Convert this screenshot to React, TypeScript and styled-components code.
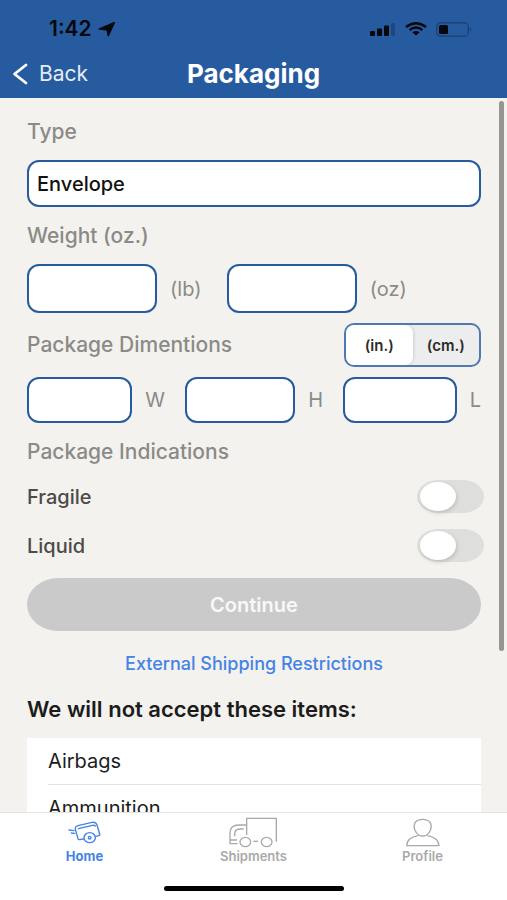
import React, { useState } from "react";
import styled, { createGlobalStyle, css } from "styled-components";

const color = {
  brand: "#275b9f",
  page: "#f3f2ee",
  label: "#8b8a87",
  text: "#1c1c1c",
  link: "#4583e6",
  disabled: "#cacaca",
  tab: "#a9a9a9",
};

const GlobalStyle = createGlobalStyle`
  *, *::before, *::after { box-sizing: border-box; }
  body { margin: 0; }
  body, button, input, select {
    font-family: Inter, "Open Sans", sans-serif;
  }
`;

const Screen = styled.div`
  display: flex;
  flex-direction: column;
  height: 100vh;
  background: ${color.page};
`;

const Header = styled.header`
  flex: none;
  background: ${color.brand};
`;

const StatusBar = styled.div`
  display: flex;
  align-items: center;
  justify-content: space-between;
  height: 50px;
  padding: 8px 35px 0 49px;
  color: #05080d;
`;

const StatusGroup = styled.div<{ $gap: number }>`
  display: flex;
  align-items: center;
  gap: ${(p) => p.$gap}px;
`;

const Clock = styled.time`
  font-size: 21px;
  line-height: 24px;
  font-weight: 600;
`;

const NavBar = styled.div`
  display: grid;
  grid-template-columns: 1fr auto 1fr;
  align-items: center;
  height: 48px;
  padding: 0 12px;
  color: #fff;
`;

const BackButton = styled.button`
  display: flex;
  align-items: center;
  gap: 11px;
  justify-self: start;
  padding: 0;
  border: 0;
  background: none;
  color: #e4ebf5;
  font-size: 21px;
  line-height: 24px;
  cursor: pointer;
`;

const Title = styled.h1`
  margin: 0;
  font-size: 26px;
  line-height: 28px;
  font-weight: 700;
`;

const Body = styled.div`
  position: relative;
  flex: 1;
  min-height: 0;
`;

const ScrollArea = styled.main`
  height: 100%;
  overflow-y: auto;
  scrollbar-width: none;
  padding: 20px 26px 0 27px;
`;

const ScrollThumb = styled.div`
  position: absolute;
  top: 3px;
  right: 3px;
  width: 5px;
  height: 77%;
  border-radius: 3px;
  background: #969590;
`;

const labelText = css`
  color: ${color.label};
  font-size: 21px;
  line-height: 28px;
  font-weight: 500;
`;

const FieldLabel = styled.label`
  display: block;
  ${labelText}
`;

const GroupLabel = styled.h2`
  margin: 0;
  ${labelText}
`;

const Unit = styled.label`
  color: ${color.label};
  font-size: 20px;
  line-height: 28px;
`;

const fieldBox = css`
  min-width: 0;
  padding: 0 8px;
  border: 2px solid ${color.brand};
  border-radius: 12px;
  background: #fff;
  color: #111;
  font-size: 20px;
  font-weight: 500;
`;

const TypeSelect = styled.select`
  ${fieldBox}
  appearance: none;
  display: block;
  width: 100%;
  height: 47px;
  margin: 14px 0 15px;
`;

const WeightRow = styled.div`
  display: grid;
  grid-template-columns: 44% 1fr;
  margin-top: 14px;
`;

const DimensionRow = styled.div`
  display: grid;
  grid-template-columns: repeat(3, minmax(0, 1fr));
  gap: 20px;
  margin: 10px 0 15px;
`;

const Measure = styled.div`
  display: flex;
  align-items: center;
  gap: 13px;
`;

const WeightInput = styled.input`
  ${fieldBox}
  flex: 0 1 130px;
  height: 49px;
`;

const DimensionInput = styled.input`
  ${fieldBox}
  flex: 1;
  height: 46px;
`;

const SplitRow = styled.div`
  display: flex;
  align-items: center;
  justify-content: space-between;
  margin-top: 10px;
`;

const Segmented = styled.div`
  display: flex;
  width: 137px;
  height: 44px;
  overflow: hidden;
  border: 2px solid #5079b3;
  border-radius: 10px;
  background: #eeedee;
`;

const Segment = styled.button<{ $active: boolean }>`
  flex: 1;
  padding: 0;
  border: 0;
  border-radius: 8px;
  background: ${(p) => (p.$active ? "#fff" : "transparent")};
  box-shadow: ${(p) => (p.$active ? "1px 0 3px rgba(0, 0, 0, 0.12)" : "none")};
  color: #2b2b2b;
  font-size: 15px;
  font-weight: 600;
  cursor: pointer;
`;

const SwitchGroup = styled.div`
  margin-top: 6px;
`;

const SwitchRow = styled.label`
  display: flex;
  align-items: center;
  justify-content: space-between;
  height: 49px;
  margin-right: -3px;
  color: #4c4b49;
  font-size: 20px;
  font-weight: 500;
`;

const Switch = styled.input`
  appearance: none;
  display: flex;
  align-items: center;
  width: 67px;
  height: 33px;
  margin: 0;
  padding: 0 3px;
  border-radius: 22px / 17px;
  background: #dededd;
  cursor: pointer;

  &::before {
    content: "";
    width: 36px;
    height: 29px;
    border-radius: 50%;
    background: #fff;
    box-shadow: 1px 2px 4px rgba(0, 0, 0, 0.14);
  }

  &:checked {
    justify-content: flex-end;
    background: ${color.link};
  }
`;

const ContinueButton = styled.button`
  display: block;
  width: 100%;
  height: 53px;
  margin-top: 8px;
  border: 0;
  border-radius: 32px / 27px;
  background: ${color.disabled};
  color: #f8f8f8;
  font-size: 20px;
  font-weight: 600;
`;

const LinkLine = styled.p`
  margin: 19px 0 0;
  text-align: center;
  line-height: 28px;
`;

const RestrictionsLink = styled.a`
  color: ${color.link};
  font-size: 18px;
  font-weight: 500;
  text-decoration: none;
`;

const ListTitle = styled.h2`
  margin: 17px 0 15px;
  color: ${color.text};
  font-size: 22px;
  line-height: 28px;
  font-weight: 600;
`;

const ItemList = styled.ul`
  margin: 0;
  padding: 0 0 0 21px;
  list-style: none;
  background: #fff;
`;

const Item = styled.li`
  height: 47px;
  border-bottom: 1px solid #e3e3e3;
  color: ${color.text};
  font-size: 20px;
  line-height: 47px;
`;

const Footer = styled.footer`
  flex: none;
  border-top: 1px solid #e4e4e2;
  background: #fff;
`;

const Tabs = styled.nav`
  display: grid;
  grid-template-columns: repeat(3, 1fr);
  padding-top: 3px;
`;

const Tab = styled.a<{ $active?: boolean }>`
  display: flex;
  flex-direction: column;
  align-items: center;
  color: ${(p) => (p.$active ? color.link : color.tab)};
  font-size: 13px;
  line-height: 16px;
  font-weight: ${(p) => (p.$active ? 700 : 600)};
  text-decoration: none;
`;

const TabIcon = styled.span`
  display: flex;
  align-items: center;
  justify-content: center;
  height: 32px;
`;

const HomeIndicator = styled.div`
  width: 180px;
  height: 5px;
  margin: 22px auto 9px;
  border-radius: 3px;
  background: #000;
`;

const LocationIcon = () => (
  <svg width="18" height="15" viewBox="0 0 18 15" aria-hidden="true">
    <path d="M17 .9 11 13.900Q10 15.200 9.400 13.600L8.600 8.600 1.200 7.800Q-.4 7.100 1.200 6.300L15.800 .1Q17.300-.2 17 .9Z" fill="currentColor" />
  </svg>
);

const SignalIcon = () => (
  <svg width="26" height="14" viewBox="0 0 26 14" aria-hidden="true">
    <rect x="0" y="9" width="5" height="5" rx="1" fill="currentColor" />
    <rect x="7" y="6.500" width="5" height="7.500" rx="1" fill="currentColor" />
    <rect x="14" y="3.500" width="5" height="10.500" rx="1" fill="currentColor" />
    <rect x="21" y="1" width="4" height="13" rx="1" fill="#1d4782" />
  </svg>
);

const WifiIcon = () => (
  <svg width="22" height="14" viewBox="0 0 22 14" aria-hidden="true">
    <g fill="none" stroke="currentColor" strokeWidth="2.300">
      <path d="M1 5Q11-2.600 21 5" />
      <path d="M4.600 8Q11 3 17.400 8" />
    </g>
    <path d="M7.300 10.300Q11 7.700 14.700 10.300L11 13.600Z" fill="currentColor" />
  </svg>
);

const BatteryIcon = () => (
  <svg width="36" height="15" viewBox="0 0 36 15" aria-hidden="true">
    <rect x=".8" y=".8" width="31.500" height="13.400" rx="3.800" fill="none" stroke="#1a3f73" strokeWidth="1.200" />
    <rect x="3" y="3" width="9" height="9" rx="1.500" fill="currentColor" />
    <path d="M33.800 5.500q3 2 0 4z" fill="#1a3f73" />
  </svg>
);

const ChevronIcon = () => (
  <svg width="16" height="22" viewBox="0 0 16 22" aria-hidden="true">
    <path d="M14 2 2.500 11 14 20" fill="none" stroke="#fff" strokeWidth="2.800" strokeLinecap="round" strokeLinejoin="round" />
  </svg>
);

const CartIcon = () => (
  <svg width="34" height="25" viewBox="204 388 102 75" fill="none" stroke="currentColor" strokeWidth="4.200" strokeLinecap="round" strokeLinejoin="round" aria-hidden="true">
    <path d="M207 418 222 420M214 427 224 428" />
    <path d="M250 445 238 447Q235 447 234 444L226 416Q224 408 234 405L276 395Q287 393 291 403L299 430Q300 434 296 435L288 437" />
    <path d="M235 414 278 404Q283 403 286 406" />
    <ellipse cx="269" cy="441" rx="17" ry="15" />
    <circle cx="269" cy="441" r="4" />
  </svg>
);

const TruckIcon = () => (
  <svg width="49" height="31" viewBox="44 18 147 93" fill="none" stroke="currentColor" strokeWidth="4" aria-hidden="true">
    <path d="M97 72V22H186V92" />
    <path d="M95 42H74Q47 42 47 66V98H70M47 87H68M88 54H76Q61 54 61 70V76" />
    <ellipse cx="93" cy="93" rx="16" ry="14" />
    <ellipse cx="157" cy="93" rx="16" ry="14" />
    <path d="M117 91H131" />
  </svg>
);

const PersonIcon = () => (
  <svg width="36" height="29" viewBox="455 380 108 87" fill="none" stroke="currentColor" strokeWidth="4" strokeLinejoin="round" aria-hidden="true">
    <path d="M508 384Q524 384 531 394Q536 404 532 415Q527 426 519 432Q508 436 497 432Q489 426 484 415Q480 404 485 394Q492 384 508 384Z" />
    <path d="M494 433Q461 439 460 463H557Q555 439 522 433" />
  </svg>
);

const dimensions = ["W", "H", "L"];
const indications = ["Fragile", "Liquid"];
const restrictedItems = ["Airbags", "Ammunition"];
const lengthUnits = ["in.", "cm."];

export default function App() {
  const [unit, setUnit] = useState("in.");

  return (
    <Screen>
      <GlobalStyle />
      <Header>
        <StatusBar>
          <StatusGroup $gap={6}>
            <Clock>1:42</Clock>
            <LocationIcon />
          </StatusGroup>
          <StatusGroup $gap={9}>
            <SignalIcon />
            <WifiIcon />
            <BatteryIcon />
          </StatusGroup>
        </StatusBar>
        <NavBar>
          <BackButton type="button">
            <ChevronIcon />
            Back
          </BackButton>
          <Title>Packaging</Title>
        </NavBar>
      </Header>

      <Body>
        <ScrollArea>
          <FieldLabel htmlFor="type">Type</FieldLabel>
          <TypeSelect id="type" defaultValue="Envelope">
            <option>Envelope</option>
          </TypeSelect>

          <GroupLabel>Weight (oz.)</GroupLabel>
          <WeightRow>
            <Measure>
              <WeightInput id="lb" inputMode="decimal" />
              <Unit htmlFor="lb">(lb)</Unit>
            </Measure>
            <Measure>
              <WeightInput id="oz" inputMode="decimal" />
              <Unit htmlFor="oz">(oz)</Unit>
            </Measure>
          </WeightRow>

          <SplitRow>
            <GroupLabel>Package Dimentions</GroupLabel>
            <Segmented>
              {lengthUnits.map((u) => (
                <Segment key={u} type="button" $active={u === unit} aria-pressed={u === unit} onClick={() => setUnit(u)}>
                  ({u})
                </Segment>
              ))}
            </Segmented>
          </SplitRow>
          <DimensionRow>
            {dimensions.map((d) => (
              <Measure key={d}>
                <DimensionInput id={d} inputMode="decimal" />
                <Unit htmlFor={d}>{d}</Unit>
              </Measure>
            ))}
          </DimensionRow>

          <GroupLabel>Package Indications</GroupLabel>
          <SwitchGroup>
            {indications.map((name) => (
              <SwitchRow key={name}>
                {name}
                <Switch type="checkbox" role="switch" />
              </SwitchRow>
            ))}
          </SwitchGroup>

          <ContinueButton type="button" disabled>
            Continue
          </ContinueButton>
          <LinkLine>
            <RestrictionsLink href="#restrictions">External Shipping Restrictions</RestrictionsLink>
          </LinkLine>

          <ListTitle id="restrictions">We will not accept these items:</ListTitle>
          <ItemList>
            {restrictedItems.map((item) => (
              <Item key={item}>{item}</Item>
            ))}
          </ItemList>
        </ScrollArea>
        <ScrollThumb />
      </Body>

      <Footer>
        <Tabs>
          <Tab href="#home" $active aria-current="page">
            <TabIcon><CartIcon /></TabIcon>
            Home
          </Tab>
          <Tab href="#shipments">
            <TabIcon><TruckIcon /></TabIcon>
            Shipments
          </Tab>
          <Tab href="#profile">
            <TabIcon><PersonIcon /></TabIcon>
            Profile
          </Tab>
        </Tabs>
        <HomeIndicator />
      </Footer>
    </Screen>
  );
}
